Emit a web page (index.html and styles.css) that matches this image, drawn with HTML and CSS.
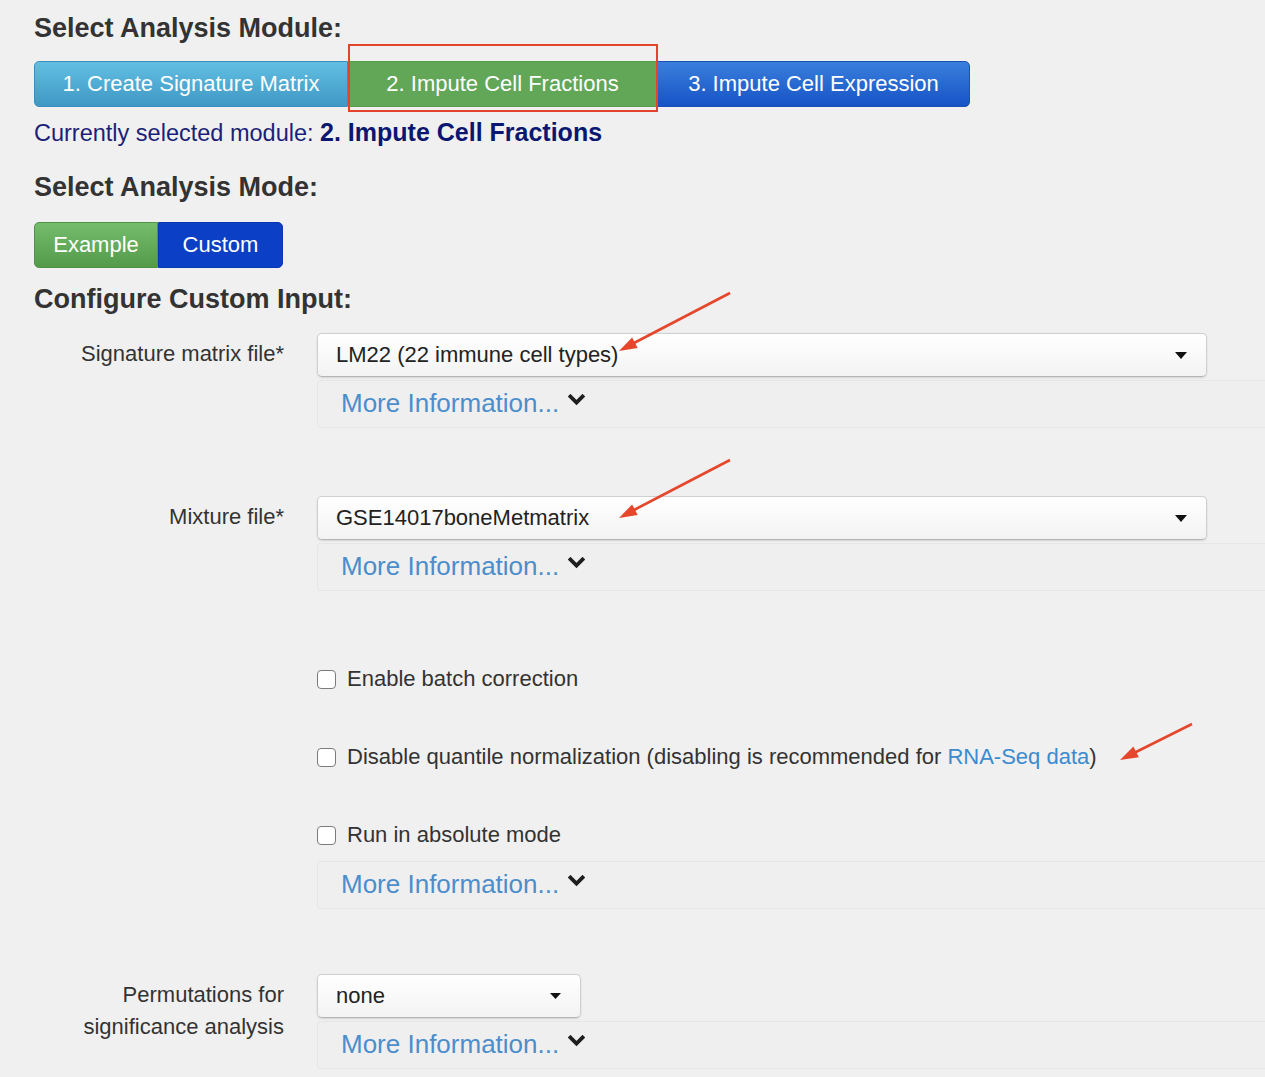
FILE: index.html
```html
<!DOCTYPE html>
<html>
<head>
<meta charset="utf-8">
<link rel="stylesheet" href="styles.css">
</head>
<body>
<div class="page">
  <h2 class="section-title title-module">Select Analysis Module:</h2>
  <div class="btn-group module-group">
    <div class="btn btn-info">1. Create Signature Matrix</div>
    <div class="btn btn-success">2. Impute Cell Fractions</div>
    <div class="btn btn-primary">3. Impute Cell Expression</div>
  </div>
  <p class="current">Currently selected module: <strong>2. Impute Cell Fractions</strong></p>

  <h2 class="section-title title-mode">Select Analysis Mode:</h2>
  <div class="btn-group mode-group">
    <div class="btn btn-example">Example</div>
    <div class="btn btn-custom">Custom</div>
  </div>

  <h2 class="section-title title-config">Configure Custom Input:</h2>

  <div class="form">
    <div class="form-row">
      <div class="label">Signature matrix file*</div>
      <div class="field">
        <div class="select select-wide"><span>LM22 (22 immune cell types)</span><svg class="caret" width="12" height="7" viewBox="0 0 12 7"><polygon points="0,0 12,0 6,7"/></svg></div>
        <div class="more-info">More Information... <svg class="chev" width="17" height="12" viewBox="0 0 17 12"><polyline points="2.5,2.5 8.5,8.5 14.5,2.5"/></svg></div>
      </div>
    </div>

    <div class="form-row row-mixture">
      <div class="label">Mixture file*</div>
      <div class="field">
        <div class="select select-wide"><span>GSE14017boneMetmatrix</span><svg class="caret" width="12" height="7" viewBox="0 0 12 7"><polygon points="0,0 12,0 6,7"/></svg></div>
        <div class="more-info">More Information... <svg class="chev" width="17" height="12" viewBox="0 0 17 12"><polyline points="2.5,2.5 8.5,8.5 14.5,2.5"/></svg></div>
      </div>
    </div>

    <div class="form-row row-checks">
      <div class="label"></div>
      <div class="field">
        <label class="check"><span class="box"></span><span>Enable batch correction</span></label>
        <label class="check"><span class="box"></span><span>Disable quantile normalization (disabling is recommended for <a class="link">RNA-Seq data</a>)</span></label>
        <label class="check"><span class="box"></span><span>Run in absolute mode</span></label>
        <div class="more-info info-check">More Information... <svg class="chev" width="17" height="12" viewBox="0 0 17 12"><polyline points="2.5,2.5 8.5,8.5 14.5,2.5"/></svg></div>
      </div>
    </div>

    <div class="form-row row-perm">
      <div class="label">Permutations for<br>significance analysis</div>
      <div class="field">
        <div class="select select-small"><span>none</span><svg class="caret" width="11" height="6" viewBox="0 0 11 6"><polygon points="0,0 11,0 5.5,6"/></svg></div>
        <div class="more-info">More Information... <svg class="chev" width="17" height="12" viewBox="0 0 17 12"><polyline points="2.5,2.5 8.5,8.5 14.5,2.5"/></svg></div>
      </div>
    </div>
  </div>

  <div class="highlight"></div>
  <svg class="annotations" width="1265" height="1077" viewBox="0 0 1265 1077">
    <g class="arrow">
      <line x1="730" y1="293" x2="634" y2="343"/>
      <polygon points="619,351 637.7,348 632.1,337.4"/>
    </g>
    <g class="arrow">
      <line x1="730" y1="460" x2="634" y2="510"/>
      <polygon points="619,518 637.7,515 632.1,504.4"/>
    </g>
    <g class="arrow">
      <line x1="1192" y1="724" x2="1135" y2="752.5"/>
      <polygon points="1120,760 1138.8,757.3 1133.4,746.6"/>
    </g>
  </svg>
</div>
</body>
</html>
```

FILE: styles.css
```css
html, body {
  margin: 0;
  padding: 0;
  background: #f0f0f0;
  overflow: hidden;
}
body {
  font-family: "Liberation Sans", Arial, Helvetica, sans-serif;
  color: #333;
}
.page {
  position: relative;
  width: 1300px;
  height: 1077px;
  box-sizing: border-box;
  padding: 12px 0 0 34px;
}
.section-title {
  margin: 0;
  font-size: 27px;
  line-height: 32px;
  font-weight: bold;
  color: #333;
}
.title-mode { margin-top: 23px; }
.title-config { margin-top: 15px; }

.btn-group {
  display: flex;
  margin-top: 17px;
  height: 46px;
}
.mode-group { margin-top: 19px; }
.btn {
  display: flex;
  align-items: center;
  justify-content: center;
  box-sizing: border-box;
  height: 46px;
  color: #fff;
  font-size: 22px;
  border: 1px solid rgba(0,0,0,0.12);
}
.btn:first-child { border-radius: 5px 0 0 5px; }
.btn:last-child { border-radius: 0 5px 5px 0; }
.btn-info {
  width: 314px;
  background: linear-gradient(#62bfe2, #3f98c5);
  border-color: #3a8fbd;
}
.btn-success {
  width: 309px;
  background: #62a658;
  border-color: #5a9b51;
}
.btn-primary {
  width: 313px;
  background: linear-gradient(#3a7fdc, #1653c6);
  border-color: #1a4fb5;
}
.btn-example {
  width: 124px;
  background: linear-gradient(#75bd6c, #539b4b);
  border-color: #4e9347;
}
.btn-custom {
  width: 125px;
  background: #0b3fc5;
  border-color: #0a38b0;
}

.current {
  margin: 10px 0 0 0;
  font-size: 23.5px;
  line-height: 30px;
  color: #1c1f78;
}
.current strong {
  font-size: 25px;
  color: #0b1670;
}

.form {
  margin-top: 18px;
}
.form-row {
  display: grid;
  grid-template-columns: 250px 1fr;
  column-gap: 33px;
}
.label {
  text-align: right;
  font-size: 22px;
  line-height: 32px;
  padding-top: 5px;
  color: #333;
}
.field {
  display: flex;
  flex-direction: column;
}
.select {
  position: relative;
  display: flex;
  align-items: center;
  justify-content: space-between;
  box-sizing: border-box;
  height: 44px;
  padding: 0 19px 0 18px;
  background: linear-gradient(#ffffff, #f3f3f3);
  border: 1px solid #cfcfcf;
  border-bottom-color: #b5b5b5;
  border-radius: 5px;
  box-shadow: 0 1px 2px rgba(0,0,0,0.12);
  font-size: 22px;
  color: #222;
}
.select-wide { width: 890px; }
.select-small { width: 264px; padding-right: 19px; }
.caret { fill: #111; }

.more-info {
  display: flex;
  align-items: center;
  box-sizing: border-box;
  height: 48px;
  margin-top: 3px;
  padding-left: 23px;
  padding-bottom: 2px;
  border: 1px solid #e6e6e6;
  border-right: none;
  border-radius: 4px 0 0 4px;
  background: #efefef;
  color: #4b8ecb;
  font-size: 26px;
}
.chev {
  margin-left: 9px;
  margin-top: -6px;
  fill: none;
  stroke: #1e1e1e;
  stroke-width: 3.8;
  stroke-linecap: square;
}

.row-mixture { margin-top: 68px; }
.row-checks { margin-top: 73px; }
.row-perm { margin-top: 65px; }

.check {
  display: flex;
  align-items: center;
  height: 30px;
  font-size: 22px;
  color: #333;
}
.check + .check { margin-top: 48px; }
.box {
  box-sizing: border-box;
  width: 19px;
  height: 19px;
  margin-right: 11px;
  border: 1.5px solid #7b7b7b;
  border-radius: 4px;
  background: #fff;
}
.link { color: #3a8bcf; }
.info-check { margin-top: 11px; }

.highlight {
  position: absolute;
  left: 348px;
  top: 44px;
  width: 310px;
  height: 68px;
  box-sizing: border-box;
  border: 2px solid #e4442b;
}
.annotations {
  position: absolute;
  left: 0;
  top: 0;
  pointer-events: none;
}
.arrow line {
  stroke: #e5462c;
  stroke-width: 2.6;
}
.arrow polygon {
  fill: #e5462c;
}
```
